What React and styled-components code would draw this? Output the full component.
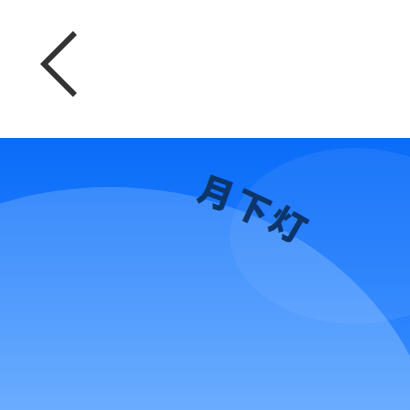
import React from 'react'
import styled, { createGlobalStyle } from 'styled-components'

const GlobalStyle = createGlobalStyle`
  html, body {
    margin: 0;
    padding: 0;
    background: #fff;
  }
  #root {
    width: 410px;
    height: 410px;
  }
`

const title = [
  { ch: '月', dy: 0, rot: 20 },
  { ch: '下', dy: 15, rot: 25 },
  { ch: '灯', dy: 32, rot: 30 },
]

function App() {
  return (
    <Page>
      <GlobalStyle />
      <Header>
        <BackButton aria-label="back">
          <svg width="40" height="66" viewBox="0 0 40 66">
            <path d="M35 4 L6 33 L35 62" fill="none" stroke="#333" strokeWidth="5.5" strokeLinecap="square" strokeLinejoin="miter" />
          </svg>
        </BackButton>
      </Header>
      <Hero>
        <SmallBlob />
        <BigBlob />
        <Title>
          {title.map((t) => (
            <Char key={t.ch} $dy={t.dy} $rot={t.rot}>{t.ch}</Char>
          ))}
        </Title>
      </Hero>
    </Page>
  )
}

export default App

const Page = styled.div`
  width: 410px;
  height: 410px;
  display: flex;
  flex-direction: column;
  overflow: hidden;
`

const Header = styled.div`
  height: 138px;
  flex-shrink: 0;
  background: #fff;
  display: flex;
  align-items: center;
  padding-left: 38px;
`

const BackButton = styled.button`
  border: 0;
  background: none;
  padding: 0;
  margin-top: -10px;
  display: flex;
  cursor: pointer;
`

const Hero = styled.div`
  flex: 1;
  position: relative;
  overflow: hidden;
  background: linear-gradient(180deg, #0a6cf8 0%, #1f7cfc 50%, #3e90ff 100%);
  padding: 33px 0 0 200px;
`

const SmallBlob = styled.div`
  position: absolute;
  left: 230px;
  top: 10px;
  width: 250px;
  height: 176px;
  border-radius: 50%;
  background: rgba(255, 255, 255, 0.07);
`

const BigBlob = styled.div`
  position: absolute;
  left: -220px;
  top: 49px;
  width: 660px;
  height: 580px;
  border-radius: 50%;
  background: linear-gradient(180deg, rgba(140, 190, 255, 0.33) 0%, rgba(160, 208, 255, 0.55) 60%);
`

const Title = styled.div`
  position: relative;
  display: flex;
  gap: 1px;
`

const Char = styled.span`
  width: 35px;
  height: 38px;
  display: flex;
  align-items: center;
  justify-content: center;
  font-family: "Noto Sans CJK SC", sans-serif;
  font-weight: 900;
  font-size: 35px;
  line-height: 1;
  color: #0c356c;
  transform: translateY(${(p) => p.$dy}px) rotate(${(p) => p.$rot}deg);
`
